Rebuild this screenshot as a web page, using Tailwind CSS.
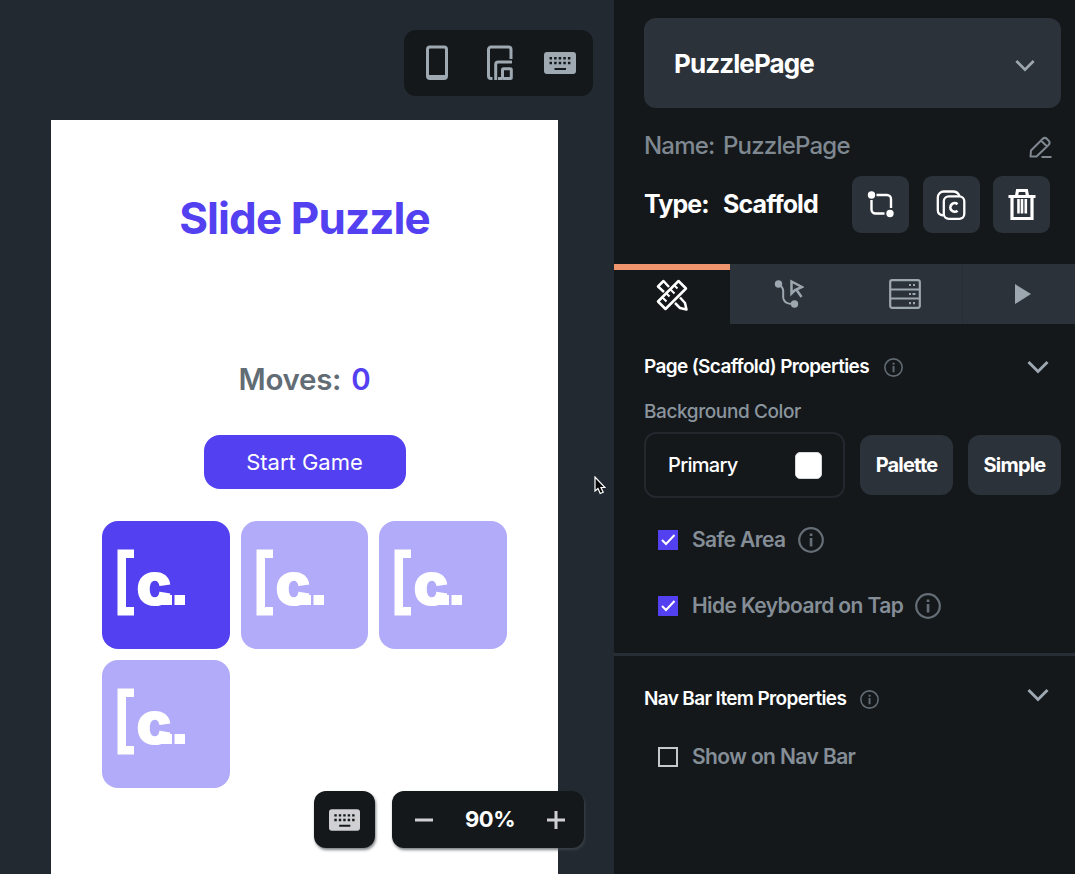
<!DOCTYPE html>
<html lang="en">
<head>
<meta charset="utf-8">
<title>PuzzlePage</title>
<script src="https://cdn.jsdelivr.net/npm/@tailwindcss/browser@4"></script>
</head>
<body class="flex h-[874px] w-[1075px] overflow-hidden bg-[#14181b] font-['Inter',sans-serif] whitespace-nowrap">
<svg class="hidden">
  <symbol id="keyboard" viewBox="0 0 32 22"><path fill="currentColor" fill-rule="evenodd" d="M3 0h26a3 3 0 0 1 3 3v16a3 3 0 0 1-3 3H3a3 3 0 0 1-3-3V3a3 3 0 0 1 3-3ZM5.500 5v2.500H8V5Zm4.600 0v2.500h2.500V5Zm4.600 0v2.500h2.500V5Zm4.600 0v2.500h2.500V5Zm4.600 0v2.500h2.500V5ZM5.500 9.700v2.500H8V9.700Zm4.600 0v2.500h2.500V9.700Zm4.600 0v2.500h2.500V9.700Zm4.600 0v2.500h2.500V9.700Zm4.600 0v2.500h2.500V9.700ZM10.500 16v2h11.500v-2Z"/></symbol>
  <symbol id="info" viewBox="0 0 26 26"><circle cx="13" cy="13" r="11.800" fill="none" stroke="currentColor" stroke-width="2.200"/><path fill="currentColor" d="M11.700 6.500h2.700v2.600h-2.700zM11.700 11h2.700v8.500h-2.700z"/></symbol>
  <symbol id="chevron" viewBox="0 0 22 14"><path d="M1.500 2 11 11.500 20.500 2" fill="none" stroke="currentColor" stroke-width="3"/></symbol>
  <symbol id="logo" viewBox="0 0 128 128"><g fill="#fff" font-family="Inter, sans-serif"><path d="M15.500 28.500h16.500v8.500h-8v49h8v8.500H15.500z"/><text x="34" y="84" font-size="59" font-weight="900" textLength="36" lengthAdjust="spacingAndGlyphs">c</text><path d="M57 74h13v10H57zM72.500 74h10.500v10H72.500z"/></g></symbol>
</svg>

<main class="relative flex h-full w-[614px] flex-col bg-[#222931] pt-[30px]">
  <div class="ml-[404px] flex h-[66px] w-[189px] items-center rounded-xl bg-[#14181b] text-[#9ea9b2]">
    <svg class="ml-[22px] h-[36px] w-[22px]" viewBox="0 0 22 36"><rect x="1.500" y="2" width="19" height="31.500" rx="2.500" fill="none" stroke="currentColor" stroke-width="3"/><path d="M2 30h18v4H2z" fill="currentColor"/></svg>
    <svg class="ml-[39px] h-[36px] w-[26px]" viewBox="0 0 26 36" fill="none" stroke="currentColor" stroke-width="3"><path d="M5.500 33.500H4A2.500 2.500 0 0 1 1.500 31V4.500A2.500 2.500 0 0 1 4 2h17.500A2.500 2.500 0 0 1 24 4.500V14"/><path d="M8.700 35V19.500a2.500 2.500 0 0 1 2.500-2.500H25" /><rect x="15.500" y="23.800" width="8.800" height="9.700" rx="1"/><path d="M11 33.500h4"/></svg>
    <svg class="ml-[31px] h-[22px] w-[32px]"><use href="#keyboard"/></svg>
  </div>

  <div class="mt-[24px] ml-[51px] flex w-[507px] flex-1 flex-col items-center bg-white">
    <h1 class="mt-[70px] h-[56px] text-[44px] leading-[56px] font-bold tracking-[-0.9px] text-[#5340f1]">Slide Puzzle</h1>
    <p class="mt-[113px] h-[40px] text-[29.500px] leading-[40px] font-semibold tracking-[-0.3px] text-[#626c75]">Moves:<span class="ml-[10px] text-[#5340f1]">0</span></p>
    <button class="mt-[36px] h-[54px] w-[202px] rounded-2xl bg-[#5340f1] text-[22px] font-normal text-white">Start Game</button>
    <div class="mt-[32px] grid w-[405px] grid-cols-3 gap-x-[10.600px] gap-y-[10.600px]">
      <div class="h-[128px] rounded-2xl bg-[#5340f1]"><svg class="size-[128px]"><use href="#logo"/></svg></div>
      <div class="h-[128px] rounded-2xl bg-[#b1abf9]"><svg class="size-[128px]"><use href="#logo"/></svg></div>
      <div class="h-[128px] rounded-2xl bg-[#b1abf9]"><svg class="size-[128px]"><use href="#logo"/></svg></div>
      <div class="h-[128px] rounded-2xl bg-[#b1abf9]"><svg class="size-[128px]"><use href="#logo"/></svg></div>
    </div>
  </div>

  <div class="absolute top-[791px] left-[314px] flex gap-[17px] text-[#d0d0d2]">
    <button class="flex h-[57px] w-[61px] items-center justify-center rounded-xl bg-[#14181b] shadow-[1px_2px_3px_rgba(70,75,80,0.7)]"><svg class="h-[22px] w-[31px]"><use href="#keyboard"/></svg></button>
    <div class="flex h-[57px] w-[192px] items-center justify-between rounded-xl bg-[#14181b] px-[23px] shadow-[1px_2px_3px_rgba(70,75,80,0.7)]">
      <svg class="size-[18px]" viewBox="0 0 18 18"><path d="M0 9h18" stroke="currentColor" stroke-width="3"/></svg>
      <span class="text-[22px] font-bold tracking-[-0.5px] text-white">90%</span>
      <svg class="mr-[-4px] size-[18px]" viewBox="0 0 18 18"><path d="M0 9h18M9 0v18" stroke="currentColor" stroke-width="3"/></svg>
    </div>
  </div>
  <svg class="absolute top-[476px] left-[594px] h-[19px] w-[12px]" viewBox="0 0 12 19"><path d="M1 1v14l3-2.500 2.200 5 3-1.300L7 11.500h4z" fill="#080808" stroke="#fff" stroke-width="1.200"/></svg>
</main>

<aside class="h-full w-[461px] bg-[#14181b] pt-[18px]">
  <div class="ml-[30px] flex h-[90px] w-[417px] items-center justify-between rounded-xl bg-[#2b323a] pr-[26px] pl-[30px]">
    <span class="text-[26px] font-bold tracking-[-0.9px] text-white">PuzzlePage</span>
    <svg class="mt-[5px] h-[13px] w-[20px] text-[#9da7b0]"><use href="#chevron"/></svg>
  </div>
  <div class="mt-[20px] flex h-[36px] items-center pr-[22px] pl-[30px] text-[24px] font-medium tracking-[-0.8px] text-[#7f8890]">
    <span class="w-[79px]">Name:</span><span>PuzzlePage</span>
    <svg class="mt-[2px] ml-auto h-[23px] w-[25px]" viewBox="0 0 25 23" fill="none" stroke="currentColor" stroke-width="2" stroke-linejoin="round"><path d="M2.500 20.500 3 14.500 14.500 3a3.200 3.200 0 0 1 4.500 0l1.500 1.500a3.200 3.200 0 0 1 0 4.500L8.500 20.500ZM13 4.500 19 10.500M13.500 21h10"/></svg>
  </div>
  <div class="mt-[12px] flex h-[57px] items-center pl-[30px] text-[25px] font-bold tracking-[-0.9px] text-white">
    <span class="w-[79px]">Type:</span><span class="w-[129px]">Scaffold</span>
    <div class="flex gap-[13.500px]">
      <button class="flex size-[57px] items-center justify-center rounded-[9px] bg-[#2b323a]"><svg class="size-[27px]" viewBox="0 0 27 27" fill="none" stroke="currentColor" stroke-width="2.400"><circle cx="4.500" cy="4" r="3.700" fill="currentColor" stroke="none"/><circle cx="23" cy="22.500" r="3.700" fill="currentColor" stroke="none"/><path d="M9.500 4H20a4 4 0 0 1 4 4v9M4.500 9v9.500a4 4 0 0 0 4 4h9"/></svg></button>
      <button class="flex size-[57px] items-center justify-center rounded-[9px] bg-[#2b323a]"><svg class="size-[30px]" viewBox="0 0 30 30" fill="none" stroke="currentColor" stroke-width="2.300"><path d="M7 25.500C4 25 1.800 23 1.800 20V7.500A6 6 0 0 1 7.800 1.500H17c3.500 0 5.500 2 6.500 4.500"/><rect x="7.800" y="6.300" width="20.500" height="22.500" rx="5"/><path d="M21.500 14.200a4.300 4.300 0 1 0 0 6.500" stroke-width="2.700"/></svg></button>
      <button class="flex size-[57px] items-center justify-center rounded-[9px] bg-[#2b323a]"><svg class="h-[33px] w-[28px]" viewBox="0 0 28 33" fill="none" stroke="currentColor" stroke-width="3.200"><path d="M.5 8.500h27M8.500 8l1-5.500h9l1 5.500M4 10v20.500h20V10"/><path d="M10.500 11v14.500M14 11v14.500M17.800 11v14.500" stroke-width="2.600"/></svg></button>
    </div>
  </div>

  <nav class="mt-[31px] flex h-[60px] bg-[#2b323a] text-[#9da7b0]">
    <div class="flex w-[116px] items-center justify-center border-t-[6px] border-[#ef946c] bg-[#14181b] text-white">
      <svg class="mt-[-4px] size-[32px]" viewBox="0 0 32 32" fill="none" stroke="currentColor" stroke-width="2.500" stroke-linejoin="round"><path d="M22.500 2 30 9.500 9.500 30 2 22.500Z"/><path d="M18.500 6.500l3 3M14.500 10.500l4 4M10.500 14.500l3 3M6.500 18.500l4 4" stroke-width="2"/><path d="M13 8 7.500 2 2 7.500 8 13M24 18.500l5 5.500 1.500 6.500L24 29l-5-5"/></svg>
    </div>
    <div class="flex w-[117px] items-center justify-center">
      <svg class="size-[30px]" viewBox="0 0 30 30" fill="none" stroke="currentColor" stroke-width="2"><circle cx="4.500" cy="5" r="3.700" fill="currentColor" stroke="none"/><circle cx="20.500" cy="25" r="3.700" fill="currentColor" stroke="none"/><path d="M4.500 5C12 10 8 14 9.500 20c1 3.500 4 5 9 5"/><path d="M17.500 2.500v12l3.500-3.500 7-3Z M22 10l5.500 8" stroke-width="2.500"/></svg>
    </div>
    <div class="flex w-[115px] items-center justify-center">
      <svg class="h-[30px] w-[32px]" viewBox="0 0 32 30" fill="none" stroke="currentColor" stroke-width="2.200"><rect x="1.200" y="1.200" width="29.600" height="27.600" rx="2"/><path d="M1 10.500h30M1 19.500h30"/><path d="M20 6h2M24 6h2M20 15h2M23.500 15h3M20 24.200h2M24 24.200h2"/></svg>
    </div>
    <div class="flex flex-1 items-center border-l border-[#272e35]">
      <svg class="ml-[52px] h-[20px] w-[16px]" viewBox="0 0 16 20"><path d="M0 0 16 10 0 20Z" fill="currentColor"/></svg>
    </div>
  </nav>

  <section class="h-[332px] border-b-[3px] border-[#272e36] pt-[29px] pl-[30px]">
    <div class="flex h-[28px] items-center">
      <h2 class="text-[19px] font-semibold tracking-[-0.65px] text-white">Page (Scaffold) Properties</h2>
      <svg class="ml-[15px] size-[19px] text-[#626b73]"><use href="#info"/></svg>
      <svg class="mr-[26px] ml-auto h-[14px] w-[22px] text-[#9da7b0]"><use href="#chevron"/></svg>
    </div>
    <p class="mt-[17px] h-[28px] text-[19px] leading-[28px] font-medium tracking-[-0.4px] text-[#8b959e]">Background Color</p>
    <div class="mt-[6px] flex items-center gap-[15px] text-[20px] text-white">
      <div class="flex h-[66px] w-[201px] items-center justify-between rounded-xl border-2 border-[#22282e] pr-[21px] pl-[22px] font-medium tracking-[-0.7px]">Primary<span class="size-[27px] rounded-[5px] border border-[#d5d8da] bg-white"></span></div>
      <button class="h-[60px] w-[93px] rounded-xl bg-[#2b323a] font-bold tracking-[-0.8px]">Palette</button>
      <button class="h-[60px] w-[93px] rounded-xl bg-[#2b323a] font-bold tracking-[-0.8px]">Simple</button>
    </div>
    <div class="mt-[28px] ml-[14px] flex h-[28px] items-center text-[21px] font-semibold tracking-[-0.6px] text-[#858e96]">
      <svg class="mr-[14px] size-[20px]" viewBox="0 0 20 20"><path fill="#5340f1" d="M0 0h20v20H0z"/><path d="m4 10 4 4 8.500-9" fill="none" stroke="#fff" stroke-width="2"/></svg>Safe Area<svg class="ml-[12px] size-[26px] text-[#656e76]"><use href="#info"/></svg>
    </div>
    <div class="mt-[38px] ml-[14px] flex h-[28px] items-center text-[21px] font-semibold tracking-[-0.6px] text-[#858e96]">
      <svg class="mr-[14px] size-[20px]" viewBox="0 0 20 20"><path fill="#5340f1" d="M0 0h20v20H0z"/><path d="m4 10 4 4 8.500-9" fill="none" stroke="#fff" stroke-width="2"/></svg>Hide Keyboard on Tap<svg class="ml-[12px] size-[26px] text-[#656e76]"><use href="#info"/></svg>
    </div>
  </section>
  <section class="pt-[29px] pl-[30px]">
    <div class="flex h-[28px] items-center">
      <h2 class="text-[19px] font-semibold tracking-[-0.65px] text-white">Nav Bar Item Properties</h2>
      <svg class="ml-[14px] size-[19px] text-[#626b73]"><use href="#info"/></svg>
      <svg class="mt-[-8px] mr-[26px] ml-auto h-[14px] w-[22px] text-[#9da7b0]"><use href="#chevron"/></svg>
    </div>
    <div class="mt-[30px] ml-[14px] flex h-[28px] items-center text-[21px] font-semibold tracking-[-0.6px] text-[#858e96]">
      <span class="mr-[14px] size-[20px] border-2 border-[#c6c9cb]"></span>Show on Nav Bar
    </div>
  </section>
</aside>
</body>
</html>
